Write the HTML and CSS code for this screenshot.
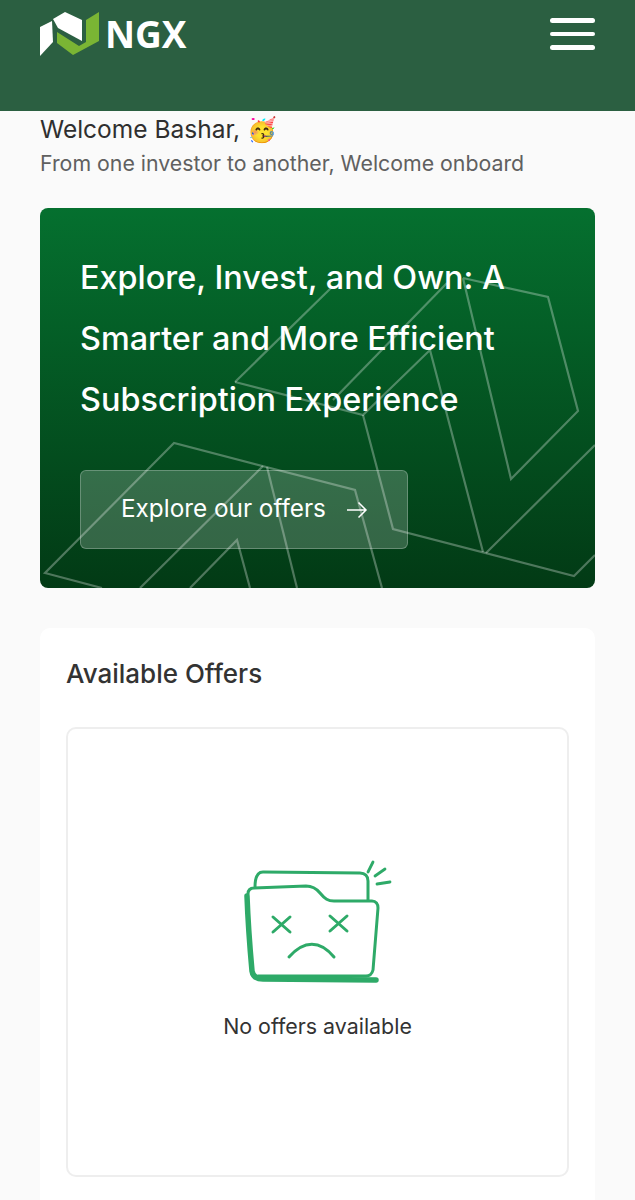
FILE: index.html
```html
<!DOCTYPE html>
<html lang="en">
<head>
<meta charset="utf-8">
<title>NGX</title>
<link rel="stylesheet" href="styles.css">
</head>
<body>
<header class="topbar">
  <div class="brand">
    <svg class="brand-mark" viewBox="0 0 60 46" aria-hidden="true">
      <path fill="#fff" d="M0 15 L12 9 L13 30 L0 44 Z"/>
      <path fill="#fff" d="M13 7 L25 0 L42 8 L42 29 L18 16 Z"/>
      <path fill="#7ab534" d="M17 20 L39 34 L46 30 L46 8 L59 0 L59 29 L33 43 L17 31 Z"/>
    </svg>
    <span class="brand-name">NGX</span>
  </div>
  <div class="menu" aria-label="Menu"><span></span><span></span><span></span></div>
</header>

<main class="page">
  <h1 class="welcome">Welcome Bashar, <span class="emoji">🥳</span></h1>
  <p class="sub">From one investor to another, Welcome onboard</p>

  <section class="hero">
    <svg class="hero-lines" viewBox="0 0 555 380" aria-hidden="true">
      <g fill="none" stroke="#fff" stroke-opacity=".3" stroke-width="2.200">
        <path d="M62 380 L5 365 L134 235 L315 282 L342 380"/>
        <path d="M100 380 L223 258"/>
        <path d="M227 259 L257 380"/>
        <path d="M150 380 L197 332 L210 380"/>
        <path d="M195 174 L292 79"/>
        <path d="M195 174 L323 207 L390 142 L443 344"/>
        <path d="M293 192 L407 75"/>
        <path d="M423 70 L508 89 L538 203 L471 271 L423 70"/>
        <path d="M323 207 L353 321 L534 368 L555 347"/>
        <path d="M446 345 L555 237"/>
      </g>
    </svg>
    <h2 class="hero-title">Explore, Invest, and Own: A Smarter and More Efficient Subscription Experience</h2>
    <a class="hero-btn">
      <span class="hero-btn-label">Explore our offers</span>
      <svg class="arrow" viewBox="0 0 22 18" aria-hidden="true"><path d="M1 9 H20 M12.5 1.5 L20 9 L12.5 16.500" fill="none" stroke="#fff" stroke-width="1.5"/></svg>
    </a>
  </section>

  <section class="offers">
    <h3 class="offers-title">Available Offers</h3>
    <div class="empty">
      <svg class="folder" viewBox="240 858 155 130" aria-hidden="true">
        <g fill="none" stroke="#2eaa68" stroke-linecap="round" stroke-linejoin="round">
          <path stroke-width="3" d="M255 888 C255 878 257 873 263 873 L360 874 C365 874 368 877 368 882 L368 901"/>
          <path stroke-width="3" d="M248 895 C248 891 250 889 254 889 L306 887 C312 887 316 889 320 894 C325 900 328 902 334 902 L372 902 C376 902 378 905 378 909 L373 971 C372 975 370 977 366 977 L258 977"/>
          <path stroke-width="5.500" d="M247 897 C248 925 250 950 252 972 C253 978 257 980 263 980 L376 981"/>
          <path stroke-width="3" d="M273 918 L290 933 M290 918 L273 933 M330 917 L347 932 M347 917 L330 932"/>
          <path stroke-width="3" d="M289 958 C304 941 320 941 334 958"/>
          <path stroke-width="2.800" d="M368 873 L373 863 M375 877 L385 870 M377 885 L390 883"/>
        </g>
      </svg>
      <p class="empty-text">No offers available</p>
    </div>
  </section>
</main>
</body>
</html>
```

FILE: styles.css
```css
* { box-sizing: border-box; }
html, body { margin: 0; padding: 0; }
body {
  background: #fafafa;
  font-family: Inter, "Noto Sans", sans-serif;
  color: #2f2f2f;
  height: 1200px;
  overflow: hidden;
}
.topbar {
  height: 111px;
  background: #2b5f41;
  display: flex;
  justify-content: space-between;
  align-items: flex-start;
  padding: 12px 40px 0;
}
.brand { display: flex; align-items: center; gap: 5px; }
.brand-mark { width: 60px; height: 46px; display: block; }
.brand-name {
  font-family: "Open Sans", sans-serif;
  font-weight: 700;
  font-size: 37px;
  line-height: 46px;
  color: #fff;
  margin-top: -3px;
}
.menu { display: flex; flex-direction: column; gap: 9px; width: 45px; padding-top: 6px; }
.menu span { display: block; height: 4.500px; border-radius: 3px; background: #fff; }
.page { padding: 0 40px; }
.welcome {
  margin: 4px 0 0;
  font-size: 24.500px;
  line-height: 28px;
  font-weight: 400;
  color: #2f2f2f;
}
.emoji { font-family: "Noto Color Emoji", sans-serif; font-size: 24px; }
.sub {
  margin: 6px 0 0;
  font-size: 21.300px;
  line-height: 26px;
  color: #606060;
}
.hero {
  position: relative;
  margin-top: 32px;
  height: 380px;
  border-radius: 8px;
  background: linear-gradient(180deg, #05702f 0%, #023a15 100%);
  padding: 39px 40px 0;
  overflow: hidden;
}
.hero-lines { position: absolute; inset: 0; width: 100%; height: 100%; }
.hero-title {
  position: relative;
  margin: 0;
  font-size: 32.400px;
  line-height: 61px;
  font-weight: 500;
  color: #fff;
}
.hero-btn {
  position: relative;
  margin-top: 40px;
  width: 328px;
  height: 79px;
  display: flex;
  align-items: center;
  gap: 20px;
  padding-left: 40px;
  border: 1px solid rgba(255,255,255,.25);
  border-radius: 6px;
  background: rgba(255,255,255,.2);
  color: #fff;
  font-size: 24.300px;
}
.hero-btn-label { margin-bottom: 3px; }
.arrow { width: 22px; height: 18px; display: block; }
.offers {
  margin-top: 40px;
  background: #fff;
  border-radius: 10px;
  padding: 28px 26px 0;
  height: 600px;
}
.offers-title {
  margin: 0;
  font-size: 26px;
  line-height: 36px;
  font-weight: 500;
  color: #333;
}
.empty {
  margin-top: 35px;
  height: 450px;
  border: 2px solid #eeeeee;
  border-radius: 10px;
  display: flex;
  flex-direction: column;
  align-items: center;
  padding-top: 128px;
}
.folder { width: 155px; height: 130px; display: block; }
.empty-text {
  margin: 25px 0 0;
  font-size: 21.400px;
  line-height: 28px;
  color: #333;
}
```
